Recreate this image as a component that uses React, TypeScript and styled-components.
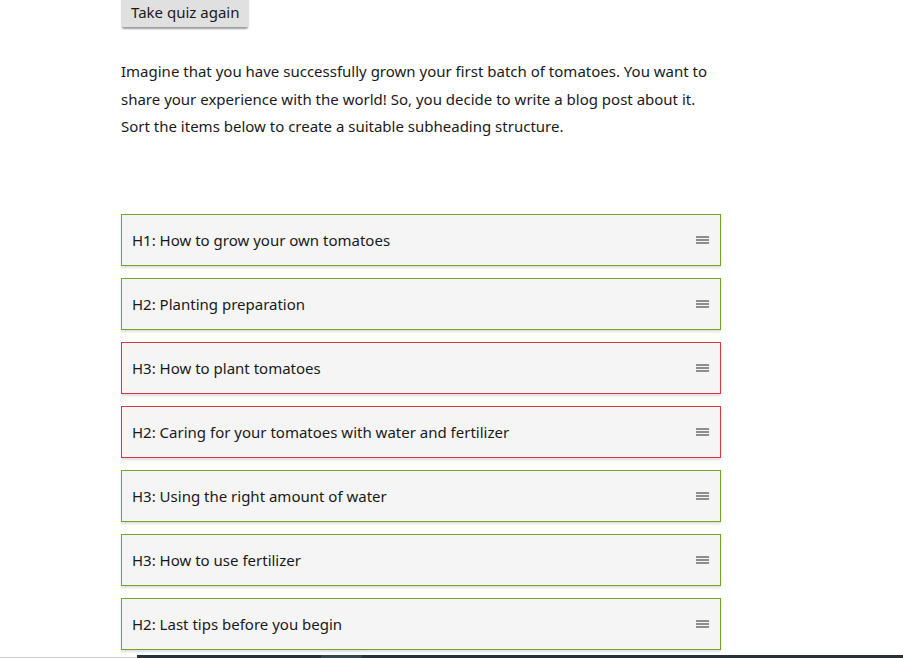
import React from "react";
import styled, { createGlobalStyle } from "styled-components";

const Global = createGlobalStyle`
  html, body { margin: 0; padding: 0; background: #fff; overflow: hidden; }
  body { font-family: "Noto Sans", "Open Sans", sans-serif; color: #1a1a1a; }
`;

const Page = styled.div`
  height: 658px;
  display: flex;
  flex-direction: column;
  position: relative;
`;

const Content = styled.div`
  flex: 1;
  width: 600px;
  margin-left: 121px;
  display: flex;
  flex-direction: column;
`;

const QuizButton = styled.button`
  align-self: flex-start;
  margin-top: -8px;
  height: 35px;
  padding: 4px 10px 0;
  border: none;
  border-radius: 3px;
  background: #e0e0e0;
  font-family: inherit;
  font-size: 15px;
  color: #1a1a1a;
  box-shadow: 0 3px 2px -1px rgba(0, 0, 0, 0.4);
`;

const Intro = styled.p`
  margin: 31px 0 0;
  font-size: 15px;
  line-height: 27.5px;
  width: 600px;
`;

const List = styled.div`
  margin-top: 73px;
  display: flex;
  flex-direction: column;
  gap: 12px;
`;

const Item = styled.div<{ $ok: boolean }>`
  height: 52px;
  box-sizing: border-box;
  border: 1px solid ${(p) => (p.$ok ? "#6fa324" : "#e0353b")};
  background: #f5f5f5;
  box-shadow: 0 2px 2px rgba(0, 0, 0, 0.12);
  display: flex;
  align-items: center;
  padding: 0 10px;
  font-size: 15px;
`;

const Label = styled.span`
  flex: 1;
`;

const Handle = styled.span`
  width: 13px;
  height: 8px;
  display: flex;
  flex-direction: column;
  justify-content: space-between;
  margin-right: 1px;
  & > i {
    display: block;
    height: 2px;
    background: #8e8e8e;
  }
`;

const ScrollBar = styled.div`
  position: absolute;
  left: 0;
  right: 0;
  bottom: 0;
  height: 3px;
  display: flex;
`;

const ScrollSeg = styled.div<{ $w?: number; $c: string }>`
  background: ${(p) => p.$c};
  ${(p) => (p.$w ? `width: ${p.$w}px;` : "flex: 1;")}
  height: ${(p) => (p.$c === "#c8c8c8" ? "1px" : "3px")};
  align-self: flex-end;
`;

const items = [
  { t: "H1: How to grow your own tomatoes", ok: true },
  { t: "H2: Planting preparation", ok: true },
  { t: "H3: How to plant tomatoes", ok: false },
  { t: "H2: Caring for your tomatoes with water and fertilizer", ok: false },
  { t: "H3: Using the right amount of water", ok: true },
  { t: "H3: How to use fertilizer", ok: true },
  { t: "H2: Last tips before you begin", ok: true },
];

export default function App() {
  return (
    <Page>
      <Global />
      <Content>
        <QuizButton>Take quiz again</QuizButton>
        <Intro>
          Imagine that you have successfully grown your first batch of tomatoes. You want to
          share your experience with the world! So, you decide to write a blog post about it.
          Sort the items below to create a suitable subheading structure.
        </Intro>
        <List>
          {items.map((it) => (
            <Item key={it.t} $ok={it.ok}>
              <Label>{it.t}</Label>
              <Handle>
                <i />
                <i />
                <i />
              </Handle>
            </Item>
          ))}
        </List>
      </Content>
      <ScrollBar>
        <ScrollSeg $w={137} $c="#c8c8c8" />
        <ScrollSeg $w={184} $c="#263238" />
        <ScrollSeg $w={41} $c="#37474f" />
        <ScrollSeg $c="#263238" />
      </ScrollBar>
    </Page>
  );
}
